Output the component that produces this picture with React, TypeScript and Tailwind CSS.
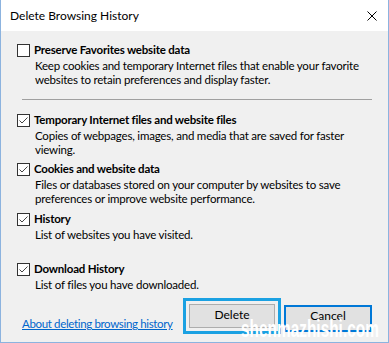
import React from "react";

type Option = {
  label: string;
  lines: string[];
  checked: boolean;
  gap: string;
};

const options: Option[] = [
  {
    label: "Temporary Internet files and website files",
    lines: [
      "Copies of webpages, images, and media that are saved for faster",
      "viewing.",
    ],
    checked: true,
    gap: "mt-[12px]",
  },
  {
    label: "Cookies and website data",
    lines: [
      "Files or databases stored on your computer by websites to save",
      "preferences or improve website performance.",
    ],
    checked: true,
    gap: "mt-[4px]",
  },
  {
    label: "History",
    lines: ["List of websites you have visited."],
    checked: true,
    gap: "mt-[5px]",
  },
  {
    label: "Download History",
    lines: ["List of files you have downloaded."],
    checked: true,
    gap: "mt-[19px]",
  },
];

function Checkbox({ checked }: { checked: boolean }) {
  return (
    <span className="flex h-[13px] w-[13px] shrink-0 items-center justify-center border border-[#333333] bg-white">
      {checked && (
        <svg viewBox="0 0 11 11" className="h-[11px] w-[11px]" aria-hidden="true">
          <path d="M1.5 5.5 L4 8 L9.5 2.5" fill="none" stroke="#444444" strokeWidth="1" />
        </svg>
      )}
    </span>
  );
}

function Item({ label, lines, checked, gap }: Option) {
  return (
    <div className={`${gap} pl-[16px]`}>
      <div className="flex h-[16px] items-center gap-[4px]">
        <Checkbox checked={checked} />
        <span className="whitespace-nowrap text-[11.5px] font-bold leading-[16px] tracking-[-0.2px]">
          {label}
        </span>
      </div>
      <div className="mt-[1px] pl-[18px]">
        {lines.map((line) => (
          <p key={line} className="whitespace-nowrap text-[11.5px] leading-[14px] tracking-[-0.2px]">
            {line}
          </p>
        ))}
      </div>
    </div>
  );
}

export default function App() {
  return (
    <div
      className="relative flex h-[343px] w-[389px] flex-col overflow-hidden border-x border-b border-[#8cb3df] text-black"
      style={{ fontFamily: 'Lato, "Noto Sans", sans-serif' }}
    >
      <div className="flex h-[31px] shrink-0 items-center justify-between bg-white pl-[9px] pr-[11px]">
        <span className="text-[12px] leading-[16px]">Delete Browsing History</span>
        <svg viewBox="0 0 10 10" className="h-[10px] w-[10px]" aria-hidden="true">
          <path d="M0.5 0.5 L9.5 9.5 M9.5 0.5 L0.5 9.5" stroke="#000" strokeWidth="1" />
        </svg>
      </div>

      <div className="flex-1 bg-[#f0f0f0] pt-[11px]">
        <Item
          label="Preserve Favorites website data"
          lines={[
            "Keep cookies and temporary Internet files that enable your favorite",
            "websites to retain preferences and display faster.",
          ]}
          checked={false}
          gap=""
        />

        <div className="ml-[21px] mr-[16px] mt-[12px] h-px bg-[#a0a0a0]" />

        {options.map((o) => (
          <Item key={o.label} {...o} />
        ))}

        <div className="mt-[6px] flex items-start pl-[21px]">
          <div className="w-[161px] pt-[12px]">
            <a className="whitespace-nowrap text-[11.5px] leading-[16px] tracking-[-0.35px] text-[#0066cc] underline">
              About deleting browsing history
            </a>
          </div>
          <div className="border-[3px] border-[#1ba1e2] p-[3px]">
            <button className="flex h-[24px] w-[86px] items-center justify-center border border-[#adadad] bg-[#e1e1e1] pb-[3px] text-[12px]">
              Delete
            </button>
          </div>
          <button className="ml-[3px] mt-[7px] flex h-[27px] w-[88px] items-center justify-center border-2 border-[#0078d7] bg-[#e1e1e1] pb-[6px] text-[12px]">
            Cancel
          </button>
        </div>
      </div>

      <span
        className="absolute left-[240px] top-[315px] origin-left scale-x-[0.67] whitespace-nowrap text-[23px] font-bold leading-[28px] text-white"
        style={{ fontFamily: '"Liberation Sans", Arial, sans-serif' }}
      >
        shenmazhishi.com
      </span>
    </div>
  );
}
